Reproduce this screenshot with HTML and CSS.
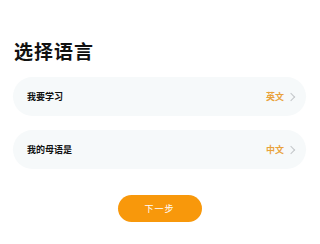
FILE: index.html
```html
<!DOCTYPE html>
<html lang="zh">
<head>
    <meta charset="UTF-8">
    <meta name="viewport" content="width=device-width, initial-scale=1.0">
    <title>选择语言</title>
    <link rel="stylesheet" href="styles.css">
</head>
<body>
    <div class="page">
        <h1 class="title">选择语言</h1>

        <div class="option">
            <span class="option-label">我要学习</span>
            <span class="option-value">英文<span class="chevron"></span></span>
        </div>

        <div class="option">
            <span class="option-label">我的母语是</span>
            <span class="option-value">中文<span class="chevron"></span></span>
        </div>

        <div class="actions">
            <button class="next-btn">下一步</button>
        </div>
    </div>
</body>
</html>
```

FILE: styles.css
```css
body {
    margin: 0;
    background: #fff;
    font-family: "Noto Sans CJK SC", "Noto Sans", sans-serif;
    color: #111;
}

.page {
    padding: 38px 14px 0 13px;
}

.title {
    margin: 0 0 13px 1px;
    font-size: 19px;
    line-height: 26px;
    font-weight: 700;
    letter-spacing: 1px;
}

.option {
    display: flex;
    align-items: center;
    justify-content: space-between;
    height: 39px;
    padding: 0 12px 0 14px;
    margin-bottom: 14px;
    background: #f6f9fa;
    border-radius: 20px;
}

.option-label {
    font-size: 9px;
    font-weight: 700;
    color: #111;
}

.option-value {
    display: flex;
    align-items: center;
    font-size: 9px;
    font-weight: 700;
    color: #e9a23b;
}

.chevron {
    display: inline-block;
    width: 5px;
    height: 5px;
    margin-left: 4px;
    border-top: 1px solid #c3c6c9;
    border-right: 1px solid #c3c6c9;
    transform: rotate(45deg);
}

.actions {
    display: flex;
    justify-content: center;
    padding-top: 12px;
}

.next-btn {
    width: 84px;
    height: 27px;
    border: none;
    border-radius: 14px;
    background: #f8980b;
    color: #fff;
    font-family: inherit;
    font-size: 9px;
    font-weight: 400;
    letter-spacing: 1px;
}
```
